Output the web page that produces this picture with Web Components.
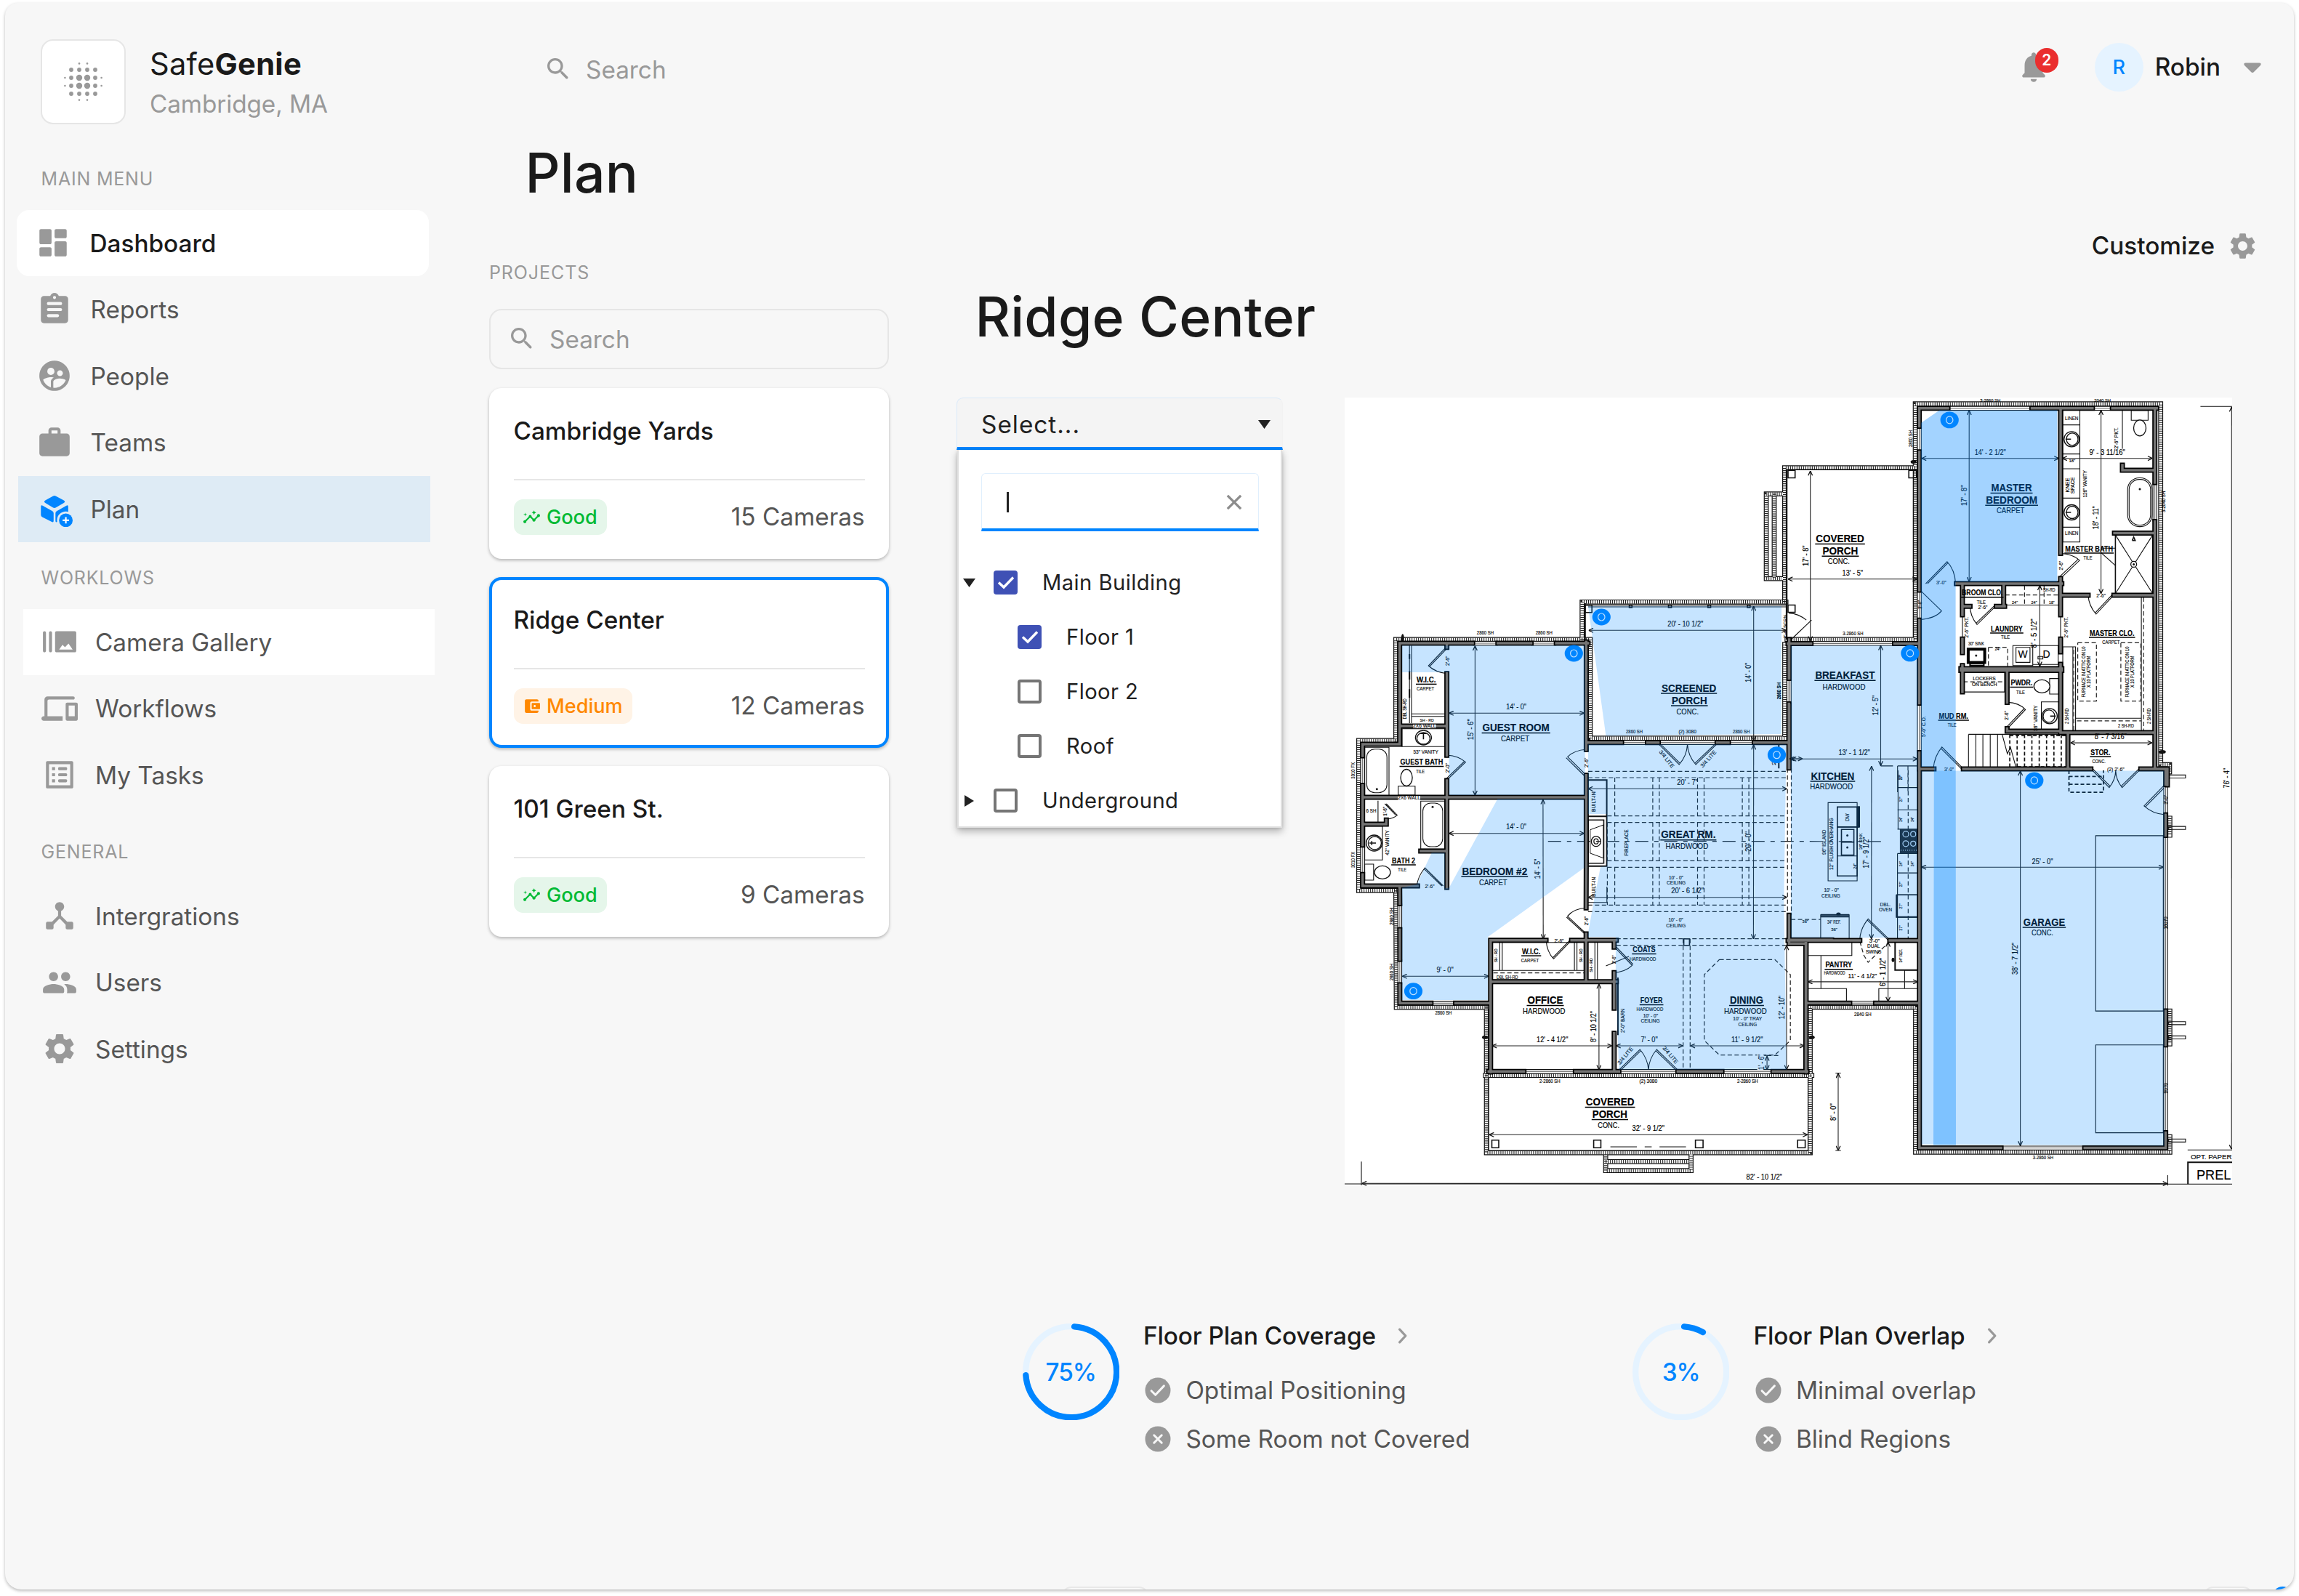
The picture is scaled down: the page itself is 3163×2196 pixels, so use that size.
<!DOCTYPE html>
<html lang="en">
<head>
<meta charset="utf-8">
<title>SafeGenie – Plan</title>
<style>
  html, body { margin: 0; padding: 0; background: #fff; }
  body { width: 3163px; height: 2196px; overflow: hidden; }
</style>
</head>
<body>
<app-shell>
  <side-nav slot="nav">
    <nav-section label="MAIN MENU">
      <nav-item icon="dashboard" state="active">Dashboard</nav-item>
      <nav-item icon="reports">Reports</nav-item>
      <nav-item icon="people">People</nav-item>
      <nav-item icon="teams">Teams</nav-item>
      <nav-item icon="plan" state="selected">Plan</nav-item>
    </nav-section>
    <nav-section label="WORKLOWS" class="inset">
      <nav-item icon="gallery" state="raised">Camera Gallery</nav-item>
      <nav-item icon="devices">Workflows</nav-item>
      <nav-item icon="tasks">My Tasks</nav-item>
    </nav-section>
    <nav-section label="GENERAL" class="inset last">
      <nav-item icon="hub">Intergrations</nav-item>
      <nav-item icon="users">Users</nav-item>
      <nav-item icon="gear">Settings</nav-item>
    </nav-section>
  </side-nav>
  <top-bar slot="top" user="Robin" count="2"></top-bar>
  <span slot="title">Plan</span>
  <project-list slot="list">
    <project-card name="Cambridge Yards" status="good" cameras="15 Cameras"></project-card>
    <project-card name="Ridge Center" status="medium" cameras="12 Cameras" selected></project-card>
    <project-card name="101 Green St." status="good" cameras="9 Cameras"></project-card>
  </project-list>
  <site-view slot="detail" name="Ridge Center">
    <floor-select slot="select">
      <tree-row open checked>Main Building</tree-row>
      <tree-row level="1" checked>Floor 1</tree-row>
      <tree-row level="1">Floor 2</tree-row>
      <tree-row level="1">Roof</tree-row>
      <tree-row closed>Underground</tree-row>
    </floor-select>
    <floor-plan slot="plan"></floor-plan>
    <coverage-stat slot="stats" value="75%" from="4" to="266" heading="Floor Plan Coverage" good="Optimal Positioning" bad="Some Room not Covered"></coverage-stat>
    <coverage-stat slot="stats" value="3%" from="4" to="29" heading="Floor Plan Overlap" good="Minimal overlap" bad="Blind Regions"></coverage-stat>
  </site-view>
</app-shell>

<script>
const define = (name, render) => customElements.define(name, class extends HTMLElement {
  connectedCallback() {
    if (this.shadowRoot) return;
    this.attachShadow({ mode: 'open' }).innerHTML = render(this);
  }
});

const GEAR = 'M19.14 12.94c.04-.3.06-.61.06-.94 0-.32-.02-.64-.07-.94l2.03-1.58c.18-.14.23-.41.12-.61l-1.92-3.32c-.12-.22-.37-.29-.59-.22l-2.39.96c-.5-.38-1.03-.7-1.62-.94l-.36-2.54c-.04-.24-.24-.41-.48-.41h-3.84c-.24 0-.43.17-.47.41l-.36 2.54c-.59.24-1.13.57-1.62.94l-2.39-.96c-.22-.08-.47 0-.59.22L2.74 8.87c-.12.21-.08.47.12.61l2.03 1.58c-.05.3-.09.63-.09.94s.02.64.07.94l-2.03 1.58c-.18.14-.23.41-.12.61l1.92 3.32c.12.22.37.29.59.22l2.39-.96c.5.38 1.03.7 1.62.94l.36 2.54c.05.24.24.41.48.41h3.84c.24 0 .44-.17.47-.41l.36-2.54c.59-.24 1.13-.56 1.62-.94l2.39.96c.22.08.47 0 .59-.22l1.92-3.32c.12-.22.07-.47-.12-.61l-2.01-1.58zM12 15.6c-1.98 0-3.6-1.62-3.6-3.6s1.62-3.6 3.6-3.6 3.6 1.62 3.6 3.6-1.62 3.6-3.6 3.6z';
const p = d => `<path d="${d}" fill="currentColor"/>`;
const ICONS = {
  dashboard: p('M4 13h6c.55 0 1-.45 1-1V4c0-.55-.45-1-1-1H4c-.55 0-1 .45-1 1v8c0 .55.45 1 1 1zm0 8h6c.55 0 1-.45 1-1v-4c0-.55-.45-1-1-1H4c-.55 0-1 .45-1 1v4c0 .55.45 1 1 1zm10 0h6c.55 0 1-.45 1-1v-8c0-.55-.45-1-1-1h-6c-.55 0-1 .45-1 1v8c0 .55.45 1 1 1zM13 4v4c0 .55.45 1 1 1h6c.55 0 1-.45 1-1V4c0-.55-.45-1-1-1h-6c-.55 0-1 .45-1 1z'),
  reports: p('M19 3h-4.18C14.4 1.84 13.3 1 12 1s-2.4.84-2.82 2H5c-1.1 0-2 .9-2 2v14c0 1.1.9 2 2 2h14c1.1 0 2-.9 2-2V5c0-1.1-.9-2-2-2zm-7 0c.55 0 1 .45 1 1s-.45 1-1 1-1-.45-1-1 .45-1 1-1zm2 14H8c-.55 0-1-.45-1-1s.45-1 1-1h6c.55 0 1 .45 1 1s-.45 1-1 1zm2.500-4H8c-.55 0-1-.45-1-1s.45-1 1-1h8c.55 0 1 .45 1 1s-.45 1-1 1zm0-4H8c-.55 0-1-.45-1-1s.45-1 1-1h8c.55 0 1 .45 1 1s-.45 1-1 1z'),
  people: p('M11.99 2c-5.52 0-10 4.480-10 10s4.480 10 10 10 10-4.480 10-10-4.480-10-10-10zm3.610 6.340c1.070 0 1.930.86 1.930 1.930 0 1.070-.86 1.930-1.930 1.930-1.070 0-1.930-.86-1.930-1.930-.01-1.070.86-1.930 1.930-1.930zm-6-1.580c1.300 0 2.360 1.060 2.360 2.360 0 1.300-1.060 2.360-2.360 2.360s-2.360-1.060-2.360-2.360c0-1.310 1.050-2.360 2.360-2.360zm0 9.130v3.750c-2.400-.75-4.300-2.600-5.140-4.960 1.050-1.120 3.670-1.690 5.140-1.690.53 0 1.200.08 1.900.22-1.640.87-1.900 2.020-1.900 2.680zM11.990 20c-.27 0-.53-.01-.79-.04v-4.070c0-1.420 2.940-2.130 4.400-2.130 1.070 0 2.920.39 3.840 1.150-1.170 2.970-4.060 5.090-7.450 5.090z'),
  teams: p('M20 6h-4V4c0-1.110-.89-2-2-2h-4c-1.110 0-2 .89-2 2v2H4c-1.110 0-2 .89-2 2v11c0 1.110.89 2 2 2h16c1.110 0 2-.89 2-2V8c0-1.110-.89-2-2-2zm-6 0h-4V4h4v2z'),
  plan: '<g transform="translate(3 3.300) scale(.475)"><g fill="#0085ff"><path d="M6.500 6.500 17 .700q1.800-.9 3.600 0L31.500 6.500q3.600 2 0 4L20.600 16.800q-1.800 1-3.600 0L6.500 10.500q-3.600-2 0-4z"/><path d="M0 15.500q0-2.800 2.500-1.400L16 21.500q1.700 1 1.700 3V35q0 3-2.600 1.500L2 30q-2-1-2-3z"/><path d="M38 15.500q0-2.800-2.500-1.400L22 21.500q-1.700 1-1.700 3V35q0 3 2.600 1.500L36 30q2-1 2-3z"/></g><circle cx="34.700" cy="34.400" r="12.300" fill="#deebf5"/><circle cx="34.700" cy="34.400" r="9.500" fill="#0085ff"/><path d="M34.700 30v8.800M30.300 34.400h8.800" stroke="#fff" stroke-width="2.200"/></g>',
  gallery: p('M2 5c-.55 0-1 .45-1 1v12c0 .55.45 1 1 1s1-.45 1-1V6c0-.55-.45-1-1-1zm4 0c-.55 0-1 .45-1 1v12c0 .55.45 1 1 1s1-.45 1-1V6c0-.55-.45-1-1-1zm16 0H10c-.55 0-1 .45-1 1v12c0 .55.45 1 1 1h12c.55 0 1-.45 1-1V6c0-.55-.45-1-1-1zM11.700 17.200l2.200-3.200 1.700 1.600 2.300-2.400 2.700 4z'),
  devices: p('M4 7c0-.55.45-1 1-1h16c.55 0 1-.45 1-1s-.45-1-1-1H4c-1.100 0-2 .9-2 2v11h-.5c-.83 0-1.500.67-1.500 1.500 0 .83.67 1.500 1.500 1.500H14v-3H4V7zm19 1h-6c-.55 0-1 .45-1 1v10c0 .55.45 1 1 1h6c.55 0 1-.45 1-1V9c0-.55-.45-1-1-1zm-1 9h-4v-7h4v7z'),
  tasks: p('M19 5v14H5V5h14m1.100-2H3.900c-.5 0-.9.4-.9.9v16.200c0 .4.4.9.9.9h16.200c.4 0 .9-.5.9-.9V3.900c0-.5-.5-.9-.9-.9zM11.800 7h4.400c.55 0 .8.45.8 1s-.25 1-.8 1h-4.400c-.55 0-.8-.45-.8-1s.25-1 .8-1zm0 4h4.400c.55 0 .8.45.8 1s-.25 1-.8 1h-4.400c-.55 0-.8-.45-.8-1s.25-1 .8-1zm0 4h4.400c.55 0 .8.45.8 1s-.25 1-.8 1h-4.400c-.55 0-.8-.45-.8-1s.25-1 .8-1zM7 7h2v2H7zm0 4h2v2H7zm0 4h2v2H7z'),
  hub: p('M17 16l-4-4V8.820C14.160 8.400 15 7.300 15 6c0-1.660-1.340-3-3-3S9 4.340 9 6c0 1.300.84 2.400 2 2.820V12l-4 4H4q-1 0-1 1v3q0 1 1 1h3q1 0 1-1v-2.050l4-4.200 4 4.200V20q0 1 1 1h3q1 0 1-1v-3q0-1-1-1z'),
  users: p('M16 11c1.660 0 2.990-1.340 2.990-3S17.660 5 16 5c-1.660 0-3 1.340-3 3s1.340 3 3 3zm-8 0c1.660 0 2.990-1.340 2.990-3S9.660 5 8 5C6.340 5 5 6.340 5 8s1.340 3 3 3zm0 2c-2.330 0-7 1.170-7 3.500V18c0 .55.45 1 1 1h12c.55 0 1-.45 1-1v-1.500c0-2.330-4.670-3.500-7-3.500zm8 0c-.29 0-.62.02-.97.05 1.160.84 1.970 1.970 1.970 3.450V18c0 .35-.07.69-.18 1H22c.55 0 1-.45 1-1v-1.500c0-2.330-4.670-3.500-7-3.500z'),
  gear: p(GEAR),
  bell: p('M12 22c1.100 0 2-.9 2-2h-4c0 1.100.89 2 2 2zm6-6v-5c0-3.070-1.640-5.640-4.500-6.320V4c0-.83-.67-1.500-1.500-1.500s-1.500.67-1.500 1.500v.68C7.630 5.360 6 7.920 6 11v5l-1.290 1.290c-.63.63-.19 1.710.7 1.710h13.170c.89 0 1.340-1.080.71-1.710L18 16z'),
  search: p('M15.500 14h-.79l-.28-.27C15.410 12.590 16 11.110 16 9.500 16 5.910 13.090 3 9.500 3S3 5.910 3 9.500 5.910 16 9.500 16c1.610 0 3.090-.59 4.230-1.570l.27.28v.79l4.300 4.300c.42.42 1.070.42 1.490 0 .41-.42.41-1.080 0-1.500L15.500 14zm-6 0C7.010 14 5 11.990 5 9.500S7.010 5 9.500 5 14 7.010 14 9.500 11.990 14 9.500 14z'),
  good: p('M21 8c-1.450 0-2.260 1.440-1.930 2.510l-3.550 3.560c-.3-.09-.74-.09-1.040 0l-2.550-2.550C12.270 10.450 11.460 9 10 9c-1.450 0-2.270 1.440-1.930 2.520l-4.560 4.550C2.440 15.740 1 16.550 1 18c0 1.100.9 2 2 2 1.450 0 2.260-1.440 1.930-2.510l4.550-4.560c.3.090.74.090 1.040 0l2.550 2.550C12.730 16.550 13.540 18 15 18c1.450 0 2.270-1.440 1.930-2.520l3.560-3.550c1.070.33 2.510-.48 2.510-1.930 0-1.100-.9-2-2-2z') + p('M15 9l.94-2.070L18 6l-2.060-.93L15 3l-.92 2.070L12 6l2.080.93zM3.500 11L4 9l2-.5L4 8l-.5-2L3 8l-2 .5L3 9z'),
  medium: p('M21 18v1c0 1.100-.9 2-2 2H5c-1.110 0-2-.9-2-2V5c0-1.100.89-2 2-2h14c1.100 0 2 .9 2 2v1h-9c-1.110 0-2 .9-2 2v8c0 1.100.89 2 2 2h9zm-8-2h9c.55 0 1-.45 1-1V9c0-.55-.45-1-1-1h-9c-.55 0-1 .45-1 1v6c0 .55.45 1 1 1zm3-2.500c-.83 0-1.500-.67-1.500-1.500s.67-1.500 1.500-1.500 1.500.67 1.500 1.500-.67 1.500-1.500 1.500z'),
  caret: '<path d="M7.600 9.800h8.800q1.200 0 .4 1L12.600 15q-.6.6-1.200 0L7.200 10.800q-.8-1 .4-1z" fill="currentColor" stroke="currentColor" stroke-linejoin="round"/>',
  chevron: '<path d="M9.700 7.400 14 12l-4.300 4.600" fill="none" stroke="currentColor" stroke-width="1.700" stroke-linecap="round" stroke-linejoin="round"/>',
  check: '<circle cx="12" cy="12" r="10" fill="currentColor"/><path d="m6.900 12.400 3.200 3.200 6.700-7.100" fill="none" stroke="#f7f7f7" stroke-width="1.700" stroke-linecap="round" stroke-linejoin="round"/>',
  cross: '<circle cx="12" cy="12" r="10" fill="currentColor"/><path d="m9 9 6 6M15 9l-6 6" fill="none" stroke="#f7f7f7" stroke-width="1.700" stroke-linecap="round"/>',
  close: '<path d="M7 7l10 10M17 7 7 17" fill="none" stroke="currentColor" stroke-width="1.800"/>'
};

define('ui-icon', el => `
  <style>:host{display:block;flex:none;width:var(--size,50px);height:var(--size,50px)}svg{display:block;width:100%;height:100%}</style>
  <svg viewBox="0 0 24 24">${ICONS[el.getAttribute('name')]}</svg>`);

define('app-shell', () => `
  <style>
    :host{display:grid;grid-template-columns:666px 1fr;box-sizing:border-box;width:3149px;height:2183px;margin:4px 7px;overflow:clip;position:relative;
      background:#f7f7f7;border-radius:18px 18px 22px 22px;box-shadow:0 2px 4px rgba(0,0,0,.27);
      font-family:Inter,"Liberation Sans",sans-serif;font-size:33.33px;color:#1a1a1a}
    main{display:flex;flex-direction:column}
    h1{margin:1px 0 0;padding-left:49.500px;height:98px;line-height:98px;font-size:75px;font-weight:500;letter-spacing:.2px}
    .body{display:flex}
    .edge{position:absolute;left:1452.500px;bottom:-40px;width:121px;height:44px;box-sizing:border-box;border:2px solid #e8e8e8;border-radius:14px;background:#f9f9f9}
    .edge.r{left:3024px;width:69px}
    .dot{position:absolute;left:3119px;bottom:-25px;width:29px;height:29px;border-radius:50%;background:#0085ff}
  </style>
  <slot name="nav"></slot>
  <main>
    <slot name="top"></slot>
    <h1><slot name="title"></slot></h1>
    <div class="body"><slot name="list"></slot><slot name="detail"></slot></div>
  </main>
  <div class="edge"></div><div class="edge r"></div><div class="dot"></div>`);

define('brand-logo', () => {
  const c = [33.4, 42, 53, 64, 75, 83.6], r = [
    [0, 0, 1.3, 1.3, 0, 0], [0, 2.9, 2.9, 2.9, 2.9, 0], [1.3, 2.9, 4.2, 4.2, 2.9, 1.3],
    [1.3, 2.9, 4.2, 4.2, 2.9, 1.3], [0, 2.9, 2.9, 2.9, 2.9, 0], [0, 0, 1.3, 1.3, 0, 0]];
  const dots = r.map((row, y) => row.map((q, x) => q ? `<circle cx="${c[x]}" cy="${c[y]}" r="${q}"/>` : '').join('')).join('');
  return `<style>:host{display:block;box-sizing:border-box;width:117px;height:117px;border:2px solid #e6e6e6;border-radius:17px;background:#fff}svg{display:block;margin:-2px}</style>
  <svg width="117" height="117" fill="#999">${dots}</svg>`;
});

define('side-nav', () => `
  <style>
    :host{display:flex;flex-direction:column}
    header{display:flex;gap:33px;height:117px;padding:50px 0 0 49px}
    .n{font-size:41.670px;line-height:50px;margin-top:8.500px;letter-spacing:.25px}
    .s{color:#999;line-height:42px;margin-top:9px;letter-spacing:-.1px}
    .sec{display:flex;flex-direction:column;padding-top:56.500px}
  </style>
  <header><brand-logo></brand-logo><div><div class="n">Safe<b>Genie</b></div><div class="s">Cambridge, MA</div></div></header>
  <div class="sec"><slot></slot></div>`);

define('nav-section', el => `
  <style>
    :host{display:flex;flex-direction:column;align-items:flex-start;padding-left:18px;margin-bottom:30.500px}
    :host(.inset){padding-left:24.500px;margin-bottom:41.500px}
    .l{font-size:25px;line-height:36px;color:#999;letter-spacing:.8px;padding:0 0 25px 31.500px}
    :host(.inset) .l{padding-left:25px;padding-bottom:25px}
  </style>
  <div class="l">${el.getAttribute('label')}</div><slot></slot>`);

define('nav-item', el => `
  <style>
    :host{display:flex;align-items:center;gap:24.500px;box-sizing:border-box;width:566.500px;height:91.500px;padding-left:25px;color:#555}
    :host([state=active]){background:#fff;border-radius:17px;margin-left:-2px;color:#1a1a1a;font-weight:500}
    :host([state=selected]){background:#deebf5}
    :host([state=raised]){background:#fff}
    ui-icon{color:#999}
    span{line-height:50px;padding-top:1px}
    :host([state=active]) span{padding-left:1px}
  </style>
  <ui-icon name="${el.getAttribute('icon')}"></ui-icon><span><slot></slot></span>`);

define('search-field', () => `
  <style>
    :host{display:flex;align-items:center;box-sizing:border-box;height:83px;color:#999}
    :host([boxed]){width:550px;border:2px solid #e6e6e6;border-radius:17px}
    ui-icon{--size:40px;margin:-2px 18px 0 24px}
    :host([boxed]) ui-icon{margin-left:23px}
  </style>
  <ui-icon name="search"></ui-icon><span>Search</span>`);

define('top-bar', el => `
  <style>
    :host{display:flex;align-items:center;justify-content:space-between;height:184px}
    search-field{margin-left:51px}
    .user{display:flex;align-items:center;margin:-8px 32px 0 0;font-weight:500}
    .bell{position:relative;--size:50px;color:#999;margin-right:59px}
    .count{position:absolute;left:27px;top:-1px;width:32px;height:34px;border-radius:17px;background:#ea2e2e;color:#fff;font:600 20.800px/34px Inter,sans-serif;text-align:center}
    .av{width:67px;height:67px;border-radius:50%;background:#e5f3ff;color:#0085ff;font-size:27px;line-height:67px;text-align:center;margin-right:16px}
    .caret{--size:50px;color:#999;margin-left:19px}
  </style>
  <search-field></search-field>
  <div class="user">
    <div class="bell"><ui-icon name="bell"></ui-icon><div class="count">${el.getAttribute('count')}</div></div>
    <div class="av">${el.getAttribute('user')[0]}</div>
    <span>${el.getAttribute('user')}</span>
    <ui-icon class="caret" name="caret"></ui-icon>
  </div>`);

define('project-list', () => `
  <style>
    :host{display:flex;flex-direction:column;width:550px;padding-top:73px}
    .l{font-size:25px;line-height:30px;color:#999;letter-spacing:.9px;margin-bottom:35px;padding-left:0}
    .cards{display:flex;flex-direction:column;gap:25.200px;padding-top:26px}
  </style>
  <div class="l">PROJECTS</div><search-field boxed></search-field>
  <div class="cards"><slot></slot></div>`);

define('project-card', el => `
  <style>
    :host{display:flex;flex-direction:column;box-sizing:border-box;width:550px;height:235px;padding:0 33.500px;background:#fff;border-radius:17px;box-shadow:0 2px 4px rgba(0,0,0,.27)}
    :host([selected]){border:4px solid #0085ff;padding:0 29.500px}
    :host([selected]) .t{margin-top:29.500px}
    .t{font-weight:500;line-height:50px;margin-top:33.500px;padding-bottom:41.500px;border-bottom:2px solid #e6e6e6}
    .r{display:flex;justify-content:space-between;align-items:center;margin-top:25px;color:#555}
    .r span{line-height:50px}
  </style>
  <div class="t">${el.getAttribute('name')}</div>
  <div class="r"><status-badge status="${el.getAttribute('status')}"></status-badge><span>${el.getAttribute('cameras')}</span></div>`);

define('status-badge', el => `
  <style>
    :host{display:flex;align-items:center;gap:8px;height:49px;box-sizing:border-box;padding:0 13.500px 0 12.500px;border-radius:12.500px;background:#e5f6ea;color:#00ba34;font-size:27.100px;font-weight:500}
    :host([status=medium]){background:#fff3e6;color:#ff8800}
    ui-icon{--size:25px}
  </style>
  <ui-icon name="${el.getAttribute('status')}"></ui-icon><span>${{ good: 'Good', medium: 'Medium' }[el.getAttribute('status')]}</span>`);

define('site-view', el => `
  <style>
    :host{display:flex;flex-direction:column;padding-left:93px;flex:1}
    .c{display:flex;justify-content:flex-end;align-items:center;gap:17px;height:50px;margin:26px 49px 0 0;font-weight:500}
    .c ui-icon{--size:43px;color:#999}
    h2{margin:23.500px 0 0;padding-left:25.500px;line-height:98px;font-size:75px;font-weight:500;letter-spacing:.18px}
    .row{display:flex;align-items:flex-start;margin-top:62.500px}
    .row slot[name=plan]::slotted(*){margin-left:85px}
    .stats{display:grid;grid-template-columns:839.500px auto;justify-content:start;margin:189px 0 0 90.500px}
  </style>
  <div class="c"><span>Customize</span><ui-icon name="gear"></ui-icon></div>
  <h2>${el.getAttribute('name')}</h2>
  <div class="row"><slot name="select"></slot><slot name="plan"></slot></div>
  <div class="stats"><slot name="stats"></slot></div>`);

define('floor-select', () => `
  <style>
    :host{display:flex;flex-direction:column;width:449px;color:#212121}
    .head{display:flex;align-items:center;justify-content:space-between;box-sizing:border-box;height:72px;padding:4px 16px 0 33px;background:#f4f4f4;border:1px solid #d9e9f9;border-right-color:#f2f2f2;border-bottom:4px solid #0085ff;border-radius:9px 9px 0 0;letter-spacing:1px}
    .menu{box-sizing:border-box;width:447px;height:520px;margin-left:1px;padding:32px 30px 0 31px;background:#fff;border:2px solid #e0e0e0;border-top:0;box-shadow:0 5px 10px rgba(0,0,0,.28),0 1px 4px rgba(0,0,0,.12)}
    .q{display:flex;align-items:center;justify-content:space-between;box-sizing:border-box;height:80px;margin-bottom:33px;padding:3px 11px 0 34px;border:1px solid #e0effd;border-bottom:4px solid #0085ff;border-radius:6px 6px 0 0}
    .cur{width:3px;height:28px;background:#212121}
    .q ui-icon{--size:44px;color:#8c8c8c}
    .tree{display:flex;flex-direction:column;margin:0 -30px 0 -31px}
  </style>
  <div class="head"><span>Select...</span><svg width="17" height="12"><path d="M0 0h17L8.500 12z" fill="#212121"/></svg></div>
  <div class="menu"><div class="q"><i class="cur"></i><ui-icon name="close"></ui-icon></div><div class="tree"><slot></slot></div></div>`);

define('tree-row', el => {
  const arrow = el.hasAttribute('open') ? 'M0 3h17L8.500 15z' : el.hasAttribute('closed') ? 'M2 1l13 8L2 17z' : '';
  return `
  <style>
    :host{display:flex;align-items:center;height:75px;padding-left:6px;font-size:29.170px;letter-spacing:.45px}
    :host([level="1"]){padding-left:39px}
    svg{flex:none}
    .a{margin-right:25px}
    .b{box-sizing:border-box;width:33px;height:33px;border:4px solid #757575;border-radius:4px;margin-right:34px}
    :host([checked]) .b{background:#3f51b5;border:0}
    .b svg{display:block}
  </style>
  <svg class="a" width="17" height="18"><path d="${arrow}" fill="#212121"/></svg>
  <div class="b">${el.hasAttribute('checked') ? '<svg width="33" height="33"><path d="M7 16.500l7 6.500L27 9.500" fill="none" stroke="#fff" stroke-width="3.400"/></svg>' : ''}</div>
  <slot></slot>`;
});

define('coverage-stat', el => {
  const pt = a => { const t = a * Math.PI / 180; return `${66.700 + 62.500 * Math.sin(t)} ${66.700 - 62.500 * Math.cos(t)}`; };
  const from = +el.getAttribute('from'), to = +el.getAttribute('to');
  return `
  <style>
    :host{display:flex;gap:33px;height:190px}
    .ring{width:133.400px;height:133.400px;display:grid;place-items:center;color:#0085ff;font-weight:500;letter-spacing:-1px}
    .ring>*{grid-area:1/1}
    .h{display:flex;align-items:center;gap:14px;font-weight:500;height:34px;letter-spacing:-.08px}
    .h ui-icon{--size:46px;color:#999}
    .i{display:flex;align-items:center;gap:17px;color:#555;height:34px;letter-spacing:-.03px}
    .i ui-icon{--size:42px;color:#999;margin-left:-.5px}
  </style>
  <div class="ring"><svg width="133.400" height="133.400" fill="none" stroke-width="8.330" stroke-linecap="round">
    <circle cx="66.700" cy="66.700" r="62.500" stroke="#e5f3ff"/>
    <path d="M${pt(from)}A62.500 62.500 0 ${to - from > 180 ? 1 : 0} 1 ${pt(to)}" stroke="#0085ff"/></svg><span>${el.getAttribute('value')}</span></div>
  <div>
    <div class="h"><span>${el.getAttribute('heading')}</span><ui-icon name="chevron"></ui-icon></div>
    <div class="i" style="margin-top:41px"><ui-icon name="check"></ui-icon><span>${el.getAttribute('good')}</span></div>
    <div class="i" style="margin-top:33px"><ui-icon name="cross"></ui-icon><span>${el.getAttribute('bad')}</span></div>
  </div>`;
});

/* ---- Floor plan -------------------------------------------------------
   The drawing is kept as four sheets (a = north-west, b = north-east,
   c = south-west, d = south-east), each with its own origin and scale.   */
const SHEET = { a: [1840, 820, 2.45, 3], b: [2420, 530, 2.3758, 2.8], c: [1840, 1220, 2.3059, 3], d: [2460, 1060, 2.45, 2.6576] };
const X = (s, u) => +(SHEET[s][0] + u / SHEET[s][2]).toFixed(1);
const Y = (s, v) => +(SHEET[s][1] + v / SHEET[s][3]).toFixed(1);
// "a 1 2 3 4 c 5 6": pairs in the current sheet, a letter switches sheets.
const points = str => {
  const out = []; let s = 'a', u = null;
  for (const t of str.trim().split(/[\s,]+/)) {
    if (SHEET[t]) s = t; else if (u === null) u = +t; else { out.push([X(s, u), Y(s, +t)]); u = null; }
  }
  return out;
};
const poly = (str, close) => 'M' + points(str).map(q => q.join(' ')).join('L') + (close ? 'Z' : '');
const lines = list => list.trim().split(/\s*;\s*/).filter(Boolean).map(l => poly(l)).join('');
// SVG path in sheet units: commands M L Q Z with absolute pairs.
const path = (s, d) => { let i = 0; return d.replace(/-?[\d.]+/g, n => i++ % 2 ? ' ' + Y(s, +n) : ' ' + X(s, +n)); };
const rects = (s, list) => list.trim().split(/\s*;\s*/).map(r => { const [a, b, c, d] = r.split(' ').map(Number); return `M${X(s, a)} ${Y(s, b)}H${X(s, c)}V${Y(s, d)}H${X(s, a)}Z`; }).join('');
const rrect = (s, a, b, c, d, r) => `<rect x="${X(s, a)}" y="${Y(s, b)}" width="${(X(s, c) - X(s, a)).toFixed(1)}" height="${(Y(s, d) - Y(s, b)).toFixed(1)}" rx="${r}"/>`;
const oval = (s, u, v, rx, ry, extra = '') => `<ellipse cx="${X(s, u)}" cy="${Y(s, v)}" rx="${rx}" ry="${ry}" ${extra}/>`;

const VENEER = `a 197 610 197 180 850 180; a 197 597 72 597 72 1216 208 1216; a 197 1216 c 187 498 478 498; a 825 180 825 25 1512 25;
  a 852 180 852 587 1508 587 1508 200; b 84 835 84 318 515 318; b 92 980 511 980 511 325; b 511 325 511 72 1313 72 1313 1462 1342 1462 1342 1490;
  b 75 419 24 419 24 745 75 745; b 50 419 50 745; c 470 779 1505 779; c 473 490 473 1098 1500 1098 1500 498; c 851 1105 851 1172 1122 1172 1122 1105; c 851 1135 1122 1135;
  d 75 866 430 866 430 1396 1287 1396 1287 1340; d 1287 175 1287 237; d 1287 880 1287 1000`;
const WALLS = `a 456 195 210 195 210 612; a 541 195 653 195; a 738 195 845 195; a 210 612 85 612 85 660; a 85 782 85 1028; a 85 1150 85 1197 270 1197; a 210 1197 c 198 70; c 198 178 198 300; c 198 405 198 481 297 481; c 375 481 486 481;
  a 369 200 369 212; a 369 320 369 658; a 369 762 369 1203; a 218 537 369 537; a 90 831 839 831; a 839 190 839 634; a 839 740 839 1116; a 839 1116 c 789 88; c 789 195 789 392;
  a 840 605 958 605; a 1045 605 1082 605; a 1280 605 1318 605; a 1405 605 1520 605; a 1523 180 1523 340; a 1523 450 1523 710; a 90 942 165 942 165 925; a 281 1053 369 1053;
  b 618 89 524 89 524 158; b 524 257 524 790; b 524 905 524 1225; b 524 1415 524 1478 572 1478; b 892 89 1090 89; b 1155 89 1300 89; b 986 89 986 648; b 986 745 986 885; b 986 978 986 1028; b 986 1075 986 1338;
  b 1294 89 1294 375; b 1294 525 1294 1478; b 645 764 990 764; b 665 764 665 885; b 800 764 800 852; b 665 852 690 852; b 776 852 803 852; b 665 978 665 1030; b 665 1080 665 1182; b 660 1092 990 1092; b 660 1099 990 1099;
  b 811 1099 811 1222; b 811 1323 811 1333; b 811 1333 986 1333; b 986 1338 1294 1338; b 1010 1340 1010 1478; b 668 1478 1085 1478; b 1248 1478 1335 1478 1335 1540;
  b 1188 308 1188 328 1294 328; b 1162 570 1294 570; b 990 809 1076 809; b 1160 809 1294 809; b 95 995 170 995; b 443 995 520 995; b 98 995 98 1130; b 98 1228 98 1475;
  c 486 765 486 221 662 221; c 743 221 885 221; c 486 392 885 392; c 878 221 878 250; c 878 355 878 502; c 878 605 878 763; c 480 763 592 763; c 755 763 893 763; c 1080 763 1220 763; c 1382 763 1490 763; c 1487 765 1487 235 1433 235 1433 118; c 1433 220 1568 220;
  d 0 622 242 622; d 343 622 440 622; d 60 632 60 1100; d 60 851 208 851; d 295 851 440 851; d 443 0 443 1381 718 1381; d 1000 1381 1273 1381 1273 1325; d 1273 0 1273 52; d 1273 163 1273 238; d 1273 880 1273 1004`;
const WINDOWS = `a 456 195 541 195; a 653 195 738 195; a 85 660 85 782; a 85 1028 85 1150; c 198 70 198 178; c 198 300 198 405; c 297 481 375 481; a 958 605 1045 605; a 1318 605 1405 605; a 1082 605 1280 605; a 1523 340 1523 450;
  b 524 158 524 257; b 618 89 892 89; b 1090 89 1155 89; b 1294 375 1294 525; b 170 995 443 995; b 98 1130 98 1228; b 524 1225 524 1415; b 524 790 524 905; c 592 763 755 763; c 893 763 1080 763; c 1220 763 1382 763; d 208 851 295 851; d 718 1381 1000 1381; d 1273 238 1273 880; d 1273 1004 1273 1325; d 1273 52 1273 163`;
const THIN = `a 243 205 243 525; a 250 205 250 525; a 250 487 362 487; a 250 497 362 497; a 137 845 137 935; a 845 45 1512 45; a 845 38 1512 38; b 993 153 1049 153; b 993 265 1049 265; b 993 322 1049 322; b 993 435 1049 435; b 993 547 1049 547;
  b 665 885 665 978; b 986 885 986 978; b 1188 97 1188 245; b 1165 577 1287 803; b 1287 577 1165 803; b 1118 645 1165 695; b 1118 628 1165 628; b 805 847 980 847; b 1250 818 1250 1333; b 1035 1283 1250 1283; b 1026 1008 1026 1333;
  b 685 1345 685 1472; b 709 1345 709 1472; b 732 1345 732 1472; b 756 1345 756 1472; b 780 1345 780 1472; b 795 1345 812 1420 822 1395 840 1472; b 685 1345 1005 1345; b 453 1467 453 1568; b 453 1467 520 1467; b 453 1550 520 1550;
  b 1443 82 1547 82; d 1347 1388 1497 1388; b 398 1467 438 1467; c 515 230 515 345; c 523 230 523 345; c 752 230 752 345; c 760 230 760 345; c 490 346 783 346; c 817 230 817 385; c 825 230 825 385; c 852 327 925 288; c 795 65 855 65 855 0;
  c 480 1090 1493 1090; c 480 785 480 1090; c 1493 785 1493 1090; c 76 1135 76 1232; d 1280 1480 1280 1518; c 23 1227 d 1497 1513; c 1354 697 1374 697; d 160 1107 178 1107; d 160 1390 178 1390;
  d 369 63 437 63; d 369 144 437 144; d 369 215 437 215; d 369 304 437 304; d 369 375 437 375; d 369 455 437 455; d 369 536 437 536; d 371 0 371 215; d 369 304 369 616; d 166 207 240 207; d 166 313 233 313; d 1265 238 1265 880; d 1265 1004 1265 1325; b 92 325 515 325; b 92 325 92 980; b 505 325 505 972`;
const THICK = `a 845 760 908 760 908 910; a 908 910 845 910; a 845 1115 908 1115 908 910; d 361 630 361 730 437 730; d 110 528 206 528; d 110 535 206 535; d 366 455 366 536 437 536; b 90 325 90 980; c 890 375 890 613; a 835 30 835 180; d 1348 1513 1348 1433 1497 1433; d 233 134 240 134 240 207; d 236 134 236 207; a 243 240 243 260; a 243 310 243 345; a 243 385 243 420; a 1488 612 1488 712`;
const DASH = `a 845 724 1515 724; a 845 750 1515 750; a 910 908 1515 908; a 910 935 1515 935; a 910 1093 1515 1093; a 910 1120 1515 1120;
  a 935 750 935 908; a 1063 750 1063 908; a 1085 750 1085 908; a 1214 750 1214 908; a 1236 750 1236 908; a 1365 750 1365 908; a 1387 750 1387 908;
  a 910 935 910 1093; a 935 935 935 1093; a 1063 935 1063 1093; a 1085 935 1085 1093; a 1214 935 1214 1093; a 1236 935 1236 1093; a 1365 935 1365 1093; a 1387 935 1387 1093;
  a 910 1120 910 1276; a 935 1120 935 1276; a 1063 1120 1063 1276; a 1085 1120 1085 1276; a 1214 1120 1214 1276; a 1236 1120 1236 1276; a 1365 1120 1365 1276; a 1387 1120 1387 1276;
  a 1517 712 c 1428 118; a 1530 712 c 1440 118; c 795 76 1425 76; c 795 103 1425 103; c 885 215 1425 215; c 885 242 1425 242; c 1097 215 1097 757; c 1119 215 1119 757;
  c 1212 301 1388 301 1437 363 1437 635 1388 695 1212 695 1164 635 1164 363 1212 301; c 1363 697 1400 697;
  b 868 772 868 847; b 932 772 932 847; b 805 808 980 808; b 1029 1020 1029 1333; b 1257 818 1257 1333; b 1040 1293 1250 1293; b 668 1143 803 1143; b 750 1010 813 1010 813 1083; b 750 1010 750 1083;
  b 1042 992 1103 992 1103 1217 1042 1217 1042 992; b 1183 992 1248 992 1248 1217 1183 1217 1183 992; d 10 545 110 545; d 405 0 405 215; d 405 304 405 616; b 487 1467 487 1568;
  d 343 625 270 702 255 675 242 625; c 495 356 783 356`;
const DASHBOLD = `b 820 1345 820 1472; b 844 1345 844 1472; b 868 1345 868 1472; b 892 1345 892 1472; b 916 1345 916 1472; b 940 1345 940 1472; b 964 1345 964 1472; b 988 1345 988 1472; b 820 1350 1005 1350; b 845 1470 1005 1470; d 947 0 947 80 1063 80 1063 0; d 947 22 1063 22; d 947 51 1063 51`;
const DIMS = `a 847 142 1513 142; a 1403 42 1403 597; a 464 206 464 823; a 376 484 832 484; a 376 980 832 980; a 693 841 c 653 215; a 845 796 1515 796; a 845 1244 1515 1244; a 1403 615 c 1320 215; a 1525 672 a 1568 672;
  b 687 97 687 757; b 532 282 980 282; b 992 282 1286 282; b 1118 97 1118 803; b 168 330 168 985; b 95 747 517 747; b 398 1003 398 1466; b 107 1440 518 1440; b 918 772 918 1083; b 1018 1378 1285 1378; b 1545 84 d 1495 1386;
  b 368 1468 d 281 616; d 450 354 1265 354; d 783 2 783 1373; d 67 773 437 773; d 337 628 337 845; d 169 1108 169 1390; c 78 1225 d 1279 1511;
  c 206 370 480 370; c 491 657 871 657; c 830 402 830 755; c 884 657 1096 657; c 1120 657 1481 657; c 1425 243 1425 755; c 482 1024 1491 1024; c 1363 700 1363 756`;
const DOORS = [['a', 'M369 208L307 288Q330 315 369 320M374 210L312 290'], ['a', 'M369 760L432 686Q410 660 369 657M364 758L427 684'], ['a', 'M839 740L776 664Q800 636 839 634M834 744L771 668'],
  ['a', 'M1082 610L1152 696Q1178 660 1180 612Q1182 660 1208 696L1280 610M1088 610L1156 692M1274 610L1204 692'], ['a', 'M165 858L202 905Q190 918 165 922M160 858L197 905'], ['a', 'M357 1197L295 1122Q270 1160 268 1197M352 1197L292 1126'],
  ['b', 'M105 980L172 905M155 905Q130 880 98 878'], ['c', 'M790 195L730 122Q750 90 790 88M785 195L727 126'], ['c', 'M743 221L686 298Q665 270 662 221M738 221L683 294'], ['c', 'M878 248L935 325Q915 350 878 355M884 248L938 321'],
  ['c', 'M893 757L960 672Q985 710 987 757Q988 710 1013 672L1080 757M899 757L963 677M1074 757L1010 677'], ['b', 'M545 765L615 680Q640 710 643 765M551 765L618 684'], ['b', 'M527 790L597 870Q575 900 527 903'], ['b', 'M985 745L1048 675Q1025 650 985 648M980 741L1043 671'],
  ['b', 'M1160 808L1102 882Q1078 850 1076 808M1154 808L1098 878'], ['b', 'M775 850L713 922Q690 890 690 850M769 850L709 918'], ['b', 'M812 1323L871 1250Q850 1223 812 1222M808 1319L867 1246'], ['b', 'M668 1478L598 1394Q573 1430 570 1478M662 1478L594 1398'],
  ['b', 'M1085 1478L1145 1550Q1165 1520 1166 1485Q1167 1520 1187 1550L1248 1478M1091 1478L1149 1546M1242 1478L1183 1546'], ['d', 'M1270 52L1200 130Q1230 160 1272 162M1275 56L1204 134'], ['d', 'M343 620L270 543Q243 580 242 618M337 620L267 547'], ['c', 'M866 1074L950 1074M975 1074L997 1074M1022 1074L1106 1074']];
// [sheet, left, right, baseline, text, size, underline]
const BOLD = [['a', 489, 715, 558, 'GUEST ROOM', 14, 1], ['a', 1093, 1277, 395, 'SCREENED', 14, 1], ['a', 1127, 1246, 446, 'PORCH', 14, 1], ['a', 267, 332, 357, 'W.I.C.', 11, 1], ['a', 212, 356, 696, 'GUEST BATH', 11, 1], ['a', 184, 262, 1103, 'BATH 2', 11, 1],
  ['a', 420, 640, 1151, 'BEDROOM #2', 14, 1], ['a', 1091, 1275, 1000, 'GREAT RM.', 14, 1], ['b', 186, 344, 605, 'COVERED', 14, 1], ['b', 208, 324, 652, 'PORCH', 14, 1], ['b', 759, 892, 409, 'MASTER', 14, 1], ['b', 742, 910, 456, 'BEDROOM', 14, 1],
  ['b', 1001, 1157, 640, 'MASTER BATH', 10.5, 1], ['b', 663, 797, 810, 'BROOM CLO.', 10.5, 1], ['b', 758, 862, 948, 'LAUNDRY', 10.5, 1], ['b', 1081, 1227, 965, 'MASTER CLO.', 10.5, 1], ['b', 184, 379, 1131, 'BREAKFAST', 14, 1], ['b', 823, 894, 1157, 'PWDR.', 10.5, 1],
  ['b', 588, 684, 1284, 'MUD RM.', 10.5, 1], ['b', 1084, 1148, 1424, 'STOR.', 10.5, 1], ['b', 170, 312, 1519, 'KITCHEN', 14, 1], ['c', 586, 644, 278, 'W.I.C.', 11, 1], ['c', 937, 1009, 270, 'COATS', 10, 1], ['c', 603, 716, 483, 'OFFICE', 14, 1], ['c', 961, 1032, 480, 'FOYER', 11, 1],
  ['c', 1245, 1351, 483, 'DINING', 14, 1], ['c', 788, 942, 903, 'COVERED', 14, 1], ['c', 809, 920, 954, 'PORCH', 14, 1], ['d', 793, 934, 568, 'GARAGE', 14, 1], ['d', 126, 216, 721, 'PANTRY', 10.5, 1]];
const TEXT = [['a', 551, 647, 600, 'CARPET', 11], ['a', 1143, 1218, 488, 'CONC.', 11], ['a', 267, 326, 391, 'CARPET', 8], ['a', 265, 294, 731, 'TILE', 8], ['a', 204, 233, 1138, 'TILE', 8], ['a', 478, 572, 1194, 'CARPET', 11], ['a', 1106, 1250, 1043, 'HARDWOOD', 11],
  ['a', 1113, 1233, 127, '20\' - 10 1/2"', 9], ['a', 569, 637, 468, '14\' - 0"', 9], ['a', 569, 637, 964, '14\' - 0"', 9], ['a', 1145, 1215, 781, '20\' - 7"', 9], ['a', 1125, 1235, 1227, '20\' - 6 1/2"', 9],
  ['a', 470, 527, 159, '2860 SH', 6.5], ['a', 668, 725, 159, '2860 SH', 6.5], ['a', 973, 1029, 567, '2860 SH', 6.5], ['a', 1150, 1210, 567, '(2) 3080', 6.5], ['a', 1333, 1390, 567, '2860 SH', 6.5], ['a', 255, 332, 543, '2X6 WALL', 7], ['a', 278, 325, 518, 'SH - RD', 6], ['a', 256, 340, 651, '53" VANITY', 7], ['a', 204, 279, 841, '2X6 WALL', 7],
  ['a', 97, 131, 893, '6 SH', 6.5], ['a', 295, 327, 1205, '2\'-6"', 7], ['a', 1117, 1166, 1170, '10\' - 0"', 6.5], ['a', 1110, 1174, 1192, 'CEILING', 7],
  ['b', 225, 297, 690, 'CONC.', 11], ['b', 777, 868, 493, 'CARPET', 11], ['b', 705, 807, 268, '14\' - 2 1/2"', 9], ['b', 1080, 1197, 268, '9\' - 3 11/16"', 9], ['b', 272, 340, 734, '13\' - 5"', 9], ['b', 260, 363, 1424, '13\' - 1 1/2"', 9], ['b', 1097, 1202, 1363, '8\' - 7 3/16"', 9],
  ['b', 723, 789, 64, '3-2860 SH', 5.2], ['b', 1096, 1150, 64, '2040 SH', 5.2], ['b', 274, 341, 964, '3-2860 SH', 6.5], ['b', 1000, 1044, 135, 'LINEN', 7.5], ['b', 1000, 1044, 576, 'LINEN', 7.5], ['b', 1013, 1034, 298, '18"', 6], ['b', 1061, 1089, 672, 'TILE', 7.5], ['b', 712, 741, 842, 'TILE', 7.5], ['b', 716, 747, 861, '2\'-6"', 7], ['b', 791, 820, 978, 'TILE', 7.5],
  ['b', 827, 846, 843, '24"', 6], ['b', 890, 909, 843, '24"', 6], ['b', 948, 966, 843, '18"', 6], ['b', 929, 968, 794, 'SH-RD', 6.5], ['b', 684, 736, 1001, '30" SINK', 6.5], ['b', 771, 790, 1022, '24"', 6], ['b', 847, 878, 1050, 'W', 14], ['b', 928, 952, 1050, 'D', 14], ['b', 1122, 1179, 997, 'CARPET', 7.5], ['b', 1103, 1133, 817, '2\'-6"', 7],
  ['b', 699, 774, 1138, 'LOCKERS', 6.5], ['b', 696, 778, 1159, 'ON BENCH', 6.5], ['b', 841, 869, 1189, 'TILE', 7.5], ['b', 617, 645, 1315, 'TILE', 7.5], ['b', 208, 348, 1172, 'HARDWOOD', 11], ['b', 167, 307, 1558, 'HARDWOOD', 11], ['b', 1174, 1226, 1320, '2 SH-RD', 7], ['b', 1089, 1133, 1455, 'CONC.', 7.5], ['b', 1138, 1194, 1486, '(2) 2\'-6"', 7], ['b', 580, 612, 768, '3\'-0"', 7], ['b', 606, 637, 1486, '3\'-0"', 7],
  ['c', 315, 368, 354, '9\' - 0"', 9], ['c', 632, 732, 642, '12\' - 4 1/2"', 9], ['c', 963, 1016, 642, '7\' - 0"', 9], ['c', 1250, 1350, 642, '11\' - 9 1/2"', 9], ['c', 935, 1038, 1008, '32\' - 9 1/2"', 9], ['c', 1297, 1411, 1210, '82\' - 10 1/2"', 9], ['c', 310, 363, 527, '2860 SH', 6.5], ['c', 641, 707, 809, '2-2860 SH', 6.5], ['c', 958, 1015, 811, '(2) 3080', 6.5], ['c', 1268, 1334, 809, '2-2860 SH', 6.5],
  ['c', 583, 639, 311, 'CARPET', 7.5], ['c', 505, 573, 380, 'DBL SH-RD', 6.5], ['c', 688, 718, 230, '2\'-6"', 7], ['c', 927, 1011, 305, 'HARDWOOD', 7.5], ['c', 588, 723, 525, 'HARDWOOD', 11], ['c', 949, 1034, 512, 'HARDWOOD', 7.5], ['c', 970, 1017, 539, '10\' - 0"', 6.5], ['c', 963, 1023, 561, 'CEILING', 7], ['c', 1227, 1362, 525, 'HARDWOOD', 11], ['c', 1255, 1347, 553, '10\' - 0" TRAY', 6.5], ['c', 1272, 1331, 575, 'CEILING', 7],
  ['c', 1050, 1097, 144, '10\' - 0"', 6.5], ['c', 1043, 1105, 167, 'CEILING', 7], ['c', 826, 895, 995, 'CONC.', 11],
  ['d', 822, 893, 342, '25\' - 0"', 9], ['d', 821, 894, 603, 'CONC.', 11], ['d', 121, 171, 444, '10\' - 0"', 6.5], ['d', 113, 176, 465, 'CEILING', 7], ['d', 310, 346, 497, 'DBL.', 7], ['d', 306, 351, 516, 'OVEN', 7], ['d', 48, 68, 557, '36"', 6], ['d', 132, 178, 561, '34" REF.', 6.5], ['d', 145, 166, 588, '36"', 6], ['d', 274, 309, 629, '3\'-0"', 6.5], ['d', 267, 310, 649, 'DUAL', 7], ['d', 262, 315, 670, 'SWING', 7], ['d', 121, 192, 747, 'HARDWOOD', 7], ['d', 202, 300, 759, '11\' - 4 1/2"', 8.5], ['d', 223, 281, 899, '2840 SH', 6.5], ['d', 825, 894, 1421, '3-2860 SH', 6.5], ['d', 1357, 1496, 1422, 'OPT. PAPER', 9.5], ['d', 1377, 1493, 1495, 'PREL', 18]];
// [sheet, centre u, top v, bottom v, text, size], read bottom to top
const UPRIGHT = [['a', 1385, 275, 356, '14\' - 0"', 9], ['a', 448, 508, 595, '15\' - 6"', 9], ['a', 675, 1085, 1168, '14\' - 5"', 9], ['a', 1385, 972, 1055, '20\' - 0"', 9], ['a', 370, 248, 288, '2\'-6"', 7], ['a', 370, 690, 730, '2\'-0"', 7], ['a', 838, 668, 708, '2\'-6"', 7], ['a', 161, 870, 908, '1\'-6"', 7], ['a', 226, 424, 508, 'DBL SH-RD', 6.5], ['a', 168, 967, 1070, '42" VANITY', 7], ['a', 52, 687, 755, '3010 FX', 6.5], ['a', 54, 1055, 1122, '3010 FX', 6.5], ['a', 864, 808, 891, 'BUILT-IN', 7.5], ['a', 864, 1160, 1242, 'BUILT-IN', 7.5], ['a', 974, 964, 1073, 'FIREPLACE', 7], ['a', 1489, 357, 427, '2860 SH', 6.5], ['a', 1470, 670, 700, '2\'', 8],
  ['b', 671, 385, 465, '17\' - 8"', 9], ['b', 1101, 465, 555, '18\' - 11"', 9], ['b', 152, 617, 697, '17\' - 8"', 9], ['b', 381, 1195, 1272, '12\' - 5"', 9], ['b', 900, 900, 1012, '8\' - 5 1/2"', 9], ['b', 1528, 1475, 1553, '76\' - 4"', 9], ['b', 496, 174, 238, '2860 SH', 6.5], ['b', 1169, 163, 245, '2\'-6" PKT.', 6.5], ['b', 1009, 357, 413, 'KNEE', 7], ['b', 1026, 355, 418, 'SPACE', 7], ['b', 1065, 328, 433, '126" VANITY', 7], ['b', 1323, 408, 490, '3-2040 SH', 6.5], ['b', 987, 677, 713, '2\'-6"', 7], ['b', 525, 828, 862, '3\'-0"', 7], ['b', 678, 893, 973, '2\'-6" PKT.', 6.5], ['b', 1004, 893, 973, '2\'-6" PKT.', 6.5], ['b', 84, 880, 975, '2\'-4" SCRN.', 6], ['b', 65, 1146, 1210, '2860 SH', 6.5], ['b', 538, 1275, 1355, '5\'-0" C.O.', 7], ['b', 810, 1255, 1290, '2\'-6"', 7], ['b', 905, 1233, 1333, '36" VANITY', 7], ['b', 1007, 1245, 1305, '2 SH-RD', 6.5], ['b', 1275, 1245, 1305, '2 SH-RD', 6.5], ['b', 1061, 1007, 1203, 'FURNACE IN ATTIC ON 10', 6.5], ['b', 1078, 1043, 1165, 'X 10 PLATFORM', 6.5], ['b', 1203, 1007, 1203, 'FURNACE IN ATTIC ON 10', 6.5], ['b', 1220, 1043, 1165, 'X 10 PLATFORM', 6.5], ['b', 461, 1500, 1520, '27"', 6],
  ['c', 813, 513, 642, '8\' - 10 1/2"', 9], ['c', 1409, 450, 547, '12\' - 10"', 9], ['c', 1346, 692, 756, '1\' - 6"', 9], ['c', 171, 87, 158, '2860 SH', 6.5], ['c', 171, 318, 388, '2860 SH', 6.5], ['c', 501, 256, 313, 'SH - RD', 6], ['c', 771, 256, 313, 'SH - RD', 6], ['c', 804, 295, 353, 'SH - RD', 6], ['c', 878, 283, 318, '2\'-6"', 6.5], ['c', 789, 122, 160, '2\'-6"', 7], ['c', 906, 503, 603, '2\'-0" BARN', 6.5],
  ['d', 264, 243, 358, '17\' - 9 1/2"', 9], ['d', 766, 630, 747, '38\' - 7 1/2"', 9], ['d', 320, 685, 790, '6\' - 1 1/2"', 9], ['d', 152, 1218, 1281, '8\' - 0"', 9], ['d', 122, 217, 308, '96" ISLAND', 6.5], ['d', 147, 174, 364, '12" FLUSH OVERHANG', 6.5], ['d', 200, 158, 186, 'DW', 7], ['d', 225, 340, 361, '24"', 6], ['d', 245, 230, 290, '34" SINK', 6], ['d', 379, 17, 35, '27"', 5.5], ['d', 379, 97, 115, '27"', 5.5], ['d', 379, 170, 188, '24"', 5.5], ['d', 418, 170, 188, '24"', 5.5], ['d', 379, 333, 351, '24"', 5.5], ['d', 418, 333, 351, '24"', 5.5], ['d', 379, 407, 426, '27"', 5.5], ['d', 379, 487, 506, '27"', 5.5], ['d', 379, 567, 586, '27"', 5.5], ['d', 380, 653, 703, '34" REF.', 6], ['d', 1273, 90, 124, '3\'-0"', 6.5], ['d', 1274, 535, 581, '16070', 6.5], ['d', 1274, 1143, 1181, '9070', 6.5]];

define('floor-plan', () => {
  const walls = lines(WALLS), veneer = lines(VENEER), win = lines(WINDOWS);
  // dimension figures are drawn a little taller than the notes beside them
  const px = size => size === 9 ? 10 : size;
  const label = ([s, l, r, v, t, size, u], bold) => {
    const x = X(s, l), w = (X(s, r) - x).toFixed(1), y = Y(s, v);
    return `<text x="${x}" y="${y}" font-size="${px(size)}" textLength="${w}" lengthAdjust="spacingAndGlyphs"${bold ? ' font-weight="700"' : ''}>${t}</text>` +
      (u ? `<path d="M${x - 1} ${y + 2.4}h${+w + 2}" stroke="#000" stroke-width="1.5"/>` : '');
  };
  const upright = ([s, u, v1, v2, t, size]) => `<text transform="translate(${(X(s, u) + px(size) * .36).toFixed(1)} ${Y(s, v2)}) rotate(-90)" font-size="${px(size)}" textLength="${(Y(s, v2) - Y(s, v1)).toFixed(1)}" lengthAdjust="spacingAndGlyphs">${t}</text>`;
  const slant = (s, u, v, a, t) => `<text transform="translate(${X(s, u)} ${Y(s, v)}) rotate(${a})" font-size="7.500" text-anchor="middle">${t}</text>`;
  const dims = DIMS.trim().split(/\s*;\s*/).map(d => `<path d="${poly(d)}" marker-start="url(#arr)" marker-end="url(#arr)"/>`).join('');
  const pins = [['a', 890, 87], ['a', 797, 237], ['a', 1481, 656], ['b', 623, 134], ['b', 494, 1033], ['b', 900, 1523], ['c', 241, 431]]
    .map(([s, u, v]) => oval(s, u, v, 12.6, 11.4) + oval(s, u, v, 4.7, 5, 'fill="none" stroke="#bfe0ff" stroke-width="1.200"')).join('');
  return `
  <style>:host{display:block;width:1221px;height:1085px;background:#fff;overflow:hidden}svg{display:block}</style>
  <svg width="1221" height="1085" viewBox="1850 547 1221 1085" fill="none" stroke-linejoin="miter">
    <defs><marker id="arr" viewBox="0 0 10 10" refX="10" refY="5" markerWidth="7" markerHeight="7" markerUnits="userSpaceOnUse" orient="auto-start-reverse"><path d="M1 .8 10 5 1 9.200" fill="none" stroke="#111" stroke-width="1.800"/></marker></defs>
    <g stroke-linecap="square"><path d="${veneer}" stroke="#111" stroke-width="6.800"/><path d="${veneer}" stroke="#fff" stroke-width="4.400"/></g>
    <path d="${veneer}" stroke="#222" stroke-width="4.800" stroke-dasharray="1.100 1.900"/>
    <g stroke="#111" stroke-width="1.100"><path d="${lines(THIN)}"/>${DOORS.map(([s, d]) => `<path d="${path(s, d)}"/>`).join('')}
      <path d="${rects('a', '92 625 174 825;281 847 362 1045;218 548 362 622;92 950 152 1090;92 1107 122 1173;205 785 262 822')}"/>
      <path d="${rects('b', '993 96 1049 604;830 1003 895 1080;840 1010 886 1068;895 1003 978 1076;668 1103 803 1182;923 1220 980 1333;993 1008 1035 1335;1217 97 1272 135;950 1130 980 1190;912 1045 928 1055')}"/>
      <path d="${rects('c', '490 230 783 385')}"/>
      <path d="${rects('d', '135 118 233 404;67 628 215 677;67 677 111 798;67 798 197 845;306 798 437 845;393 730 437 798;110 528 206 616;1037 239 1268 880;1037 1004 1268 1325')}"/>
      ${rrect('a', 99, 632, 167, 812, 11)}${rrect('a', 288, 855, 355, 1035, 11)}${rrect('b', 1205, 357, 1285, 545, 16)}${rrect('b', 1210, 363, 1280, 539, 14)}
      <path d="${rects('d', '1283 17 1340 28;1283 205 1340 216;1283 919 1340 930;1283 971 1340 982;1283 1348 1340 1359')}"/>
    </g>
    <path d="${lines(THICK)}" stroke="#111" stroke-width="2"/>
    <g stroke="#111" stroke-width="1.600"><path d="${rects('b', '1165 577 1287 803;95 328 118 357;490 328 515 357;95 847 118 875')}${rects('a', '835 38 858 68;984 38 993 48;1116 38 1126 48;1249 38 1258 48;1382 38 1391 48;845 925 898 1103')}
      ${rects('c', '490 1046 512 1078;813 1046 836 1078;1136 1046 1160 1078;1460 1046 1484 1078;1099 215 1117 242')}${rects('d', '166 134 233 386;166 134 240 207;180 216 222 262;180 262 222 310;366 455 437 536')}"/></g>
    <path d="${path('a', 'M852 965L897 945L897 1082L852 1062Z')}" stroke="#111"/>
    <path d="${rects('b', '684 1017 738 1068')}" stroke="#000" stroke-width="4"/><path d="${rects('b', '690 1072 735 1080')}" stroke="#000" stroke-width="2"/>
    <g stroke="#111" stroke-width="1.300" fill="#fff">${oval('a', 290, 585, 11, 10)}${oval('a', 290, 588, 9, 8)}${oval('a', 124, 1020, 11, 11)}${oval('a', 126, 1020, 9, 9)}${oval('b', 1022, 208, 10.500, 10.500)}${oval('b', 1024, 208, 8, 8.500)}${oval('b', 1022, 490, 10.500, 10.500)}${oval('b', 1024, 490, 8, 8.500)}${oval('b', 950, 1275, 10.500, 10.500)}${oval('b', 948, 1275, 8, 8.500)}
      ${oval('a', 233, 750, 8, 11.500)}${oval('a', 152, 1141, 11, 9)}${oval('b', 1245, 165, 8.500, 11)}${oval('b', 925, 1160, 11, 9)}${oval('b', 1225, 690, 4, 4)}${oval('a', 872, 1013, 6.500, 7)}${oval('a', 872, 1013, 3, 3.500)}</g>
    <path d="${lines('a 290 565 290 592;a 280 568 300 568;a 108 1020 130 1020;a 116 1012 116 1028;b 1002 208 1020 208;b 1002 490 1020 490;b 970 1275 952 1275;b 1220 598 1225 585 1230 598 1220 598')}" stroke="#111" stroke-width="1.600"/>
    <g fill="#111">${oval('a', 133, 797, 1.500, 1.500)}${oval('a', 321, 871, 1.500, 1.500)}${oval('b', 1245, 400, 1.500, 1.500)}${oval('b', 1225, 690, 1.500, 1.500)}${oval('b', 710, 1042, 1.500, 1.500)}${oval('d', 200, 238, 1.500, 1.500)}${oval('d', 200, 282, 1.500, 1.500)}${oval('c', 468, 622, 4, 2.500)}${oval('c', 1505, 622, 4, 2.500)}${oval('b', 505, 295, 4, 2.500)}${oval('b', 1318, 1413, 5, 2.500)}${oval('a', 836, 195, 4, 4)}${oval('b', 99, 993, 4, 4)}${oval('a', 220, 175, 2, 6)}${oval('d', 170, 525, 3, 2)}${oval('d', 354, 693, 2, 3)}</g>
    <path d="${rects('d', '377 215 437 304')}" fill="#222"/>
    <g stroke="#cfe2f3" stroke-width="1.200">${oval('d', 397, 233, 4, 4)}${oval('d', 397, 268, 4, 4)}${oval('d', 422, 233, 3.500, 3.500)}${oval('d', 422, 268, 3.500, 3.500)}<path d="${lines('d 380 292 434 292')}" stroke-dasharray="1 2"/></g>
    <path d="${lines(DASH)}" stroke="#222" stroke-width="1.200" stroke-dasharray="6 3.500"/>
    <path d="${lines(DASHBOLD)}" stroke="#111" stroke-width="1.700" stroke-dasharray="5 3"/>
    <path d="${lines('a 710 1013 1568 1013 d 315 260')}" stroke="#222" stroke-width="1.200" stroke-dasharray="18 8 6 8"/>
    <path d="${win}" stroke="#111" stroke-width="6.400"/><path d="${win}" stroke="#fff" stroke-width="4.200"/><path d="${win}" stroke="#333" stroke-width=".8"/>
    <g stroke-linecap="square"><path d="${walls}" stroke="#000" stroke-width="7"/><path d="${walls}" stroke="#747474" stroke-width="3.500"/></g>
    <g stroke="#222" stroke-width="1.100">${dims}</g>
    <g fill="#fff"><path d="${rects('a', '255 530 332 545;204 826 279 845')}${rects('b', '1097 1348 1202 1366')}${rects('c', '1332 690 1352 757')}"/></g>
    <g fill="#000" stroke="#000" stroke-width=".15" font-family='"Liberation Sans",Arial,sans-serif'>
      ${BOLD.map(t => label(t, true)).join('')}${TEXT.map(t => label(t)).join('')}${UPRIGHT.map(upright).join('')}
      ${slant('a', 1105, 678, 52, '3/4 LITE')}${slant('a', 1255, 678, -48, '3/4 LITE')}${slant('c', 918, 703, -50, '3/4 LITE')}${slant('c', 1052, 700, 50, '3/4 LITE')}
    </g>
    <g fill="#0085ff" fill-opacity=".225">
      <path d="${poly('a 218 205 835 205 835 822 376 822 376 315 218 315', 1)}"/>
      <path d="${poly('a 845 42 1497 42 1497 570 905 577', 1)}"/>
      <path d="${poly('a 540 838 832 838 832 1122 c 477 208 477 468 205 468 205 0 a 218 1204 268 1190 318 1060 362 1060 362 1205 376 1205', 1)}"/>
      <path d="${poly('a 845 612 1513 612 1505 1260 c 1425 755 893 755 883 380 883 208 795 208 797 180 815 50 a 887 1118 908 1115 908 900 845 900', 1)}"/>
      <path d="${poly('b 104 1003 520 1003 d 435 612 10 612', 1)}"/>
      <path d="${poly('b 530 1485 1325 1485 d 1268 1373 450 1367', 1)}"/>
      <path d="${poly('b 590 97 975 97 975 757 643 757 d 566 1370 490 1370 b 572 1470 530 1470 530 145', 1)}" fill-opacity=".36"/>
    </g>
    <g fill="#0085ff">${pins}</g>
  </svg>`;
});
</script>
</body>
</html>
